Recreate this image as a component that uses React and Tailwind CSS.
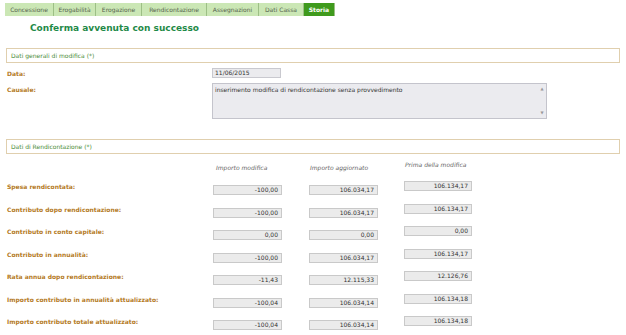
import React from 'react';

const tabs = [
  { label: 'Concessione', w: 'w-[49px]' },
  { label: 'Erogabilità', w: 'w-[42px]' },
  { label: 'Erogazione', w: 'w-[46px]' },
  { label: 'Rendicontazione', w: 'w-[65px]' },
  { label: 'Assegnazioni', w: 'w-[52px]' },
  { label: 'Dati Cassa', w: 'w-[45px]' },
  { label: 'Storia', w: 'w-[31px]', active: true },
];

const rows = [
  { label: 'Spesa rendicontata:', mod: '-100,00', agg: '106.034,17', prima: '106.134,17' },
  { label: 'Contributo dopo rendicontazione:', mod: '-100,00', agg: '106.034,17', prima: '106.134,17' },
  { label: 'Contributo in conto capitale:', mod: '0,00', agg: '0,00', prima: '0,00' },
  { label: 'Contributo in annualità:', mod: '-100,00', agg: '106.034,17', prima: '106.134,17' },
  { label: 'Rata annua dopo rendicontazione:', mod: '-11,43', agg: '12.115,33', prima: '12.126,76' },
  { label: 'Importo contributo in annualità attualizzato:', mod: '-100,04', agg: '106.034,14', prima: '106.134,18' },
  { label: 'Importo contributo totale attualizzato:', mod: '-100,04', agg: '106.034,14', prima: '106.134,18' },
];

const Field = ({ value, className = '' }) => (
  <div className={`h-[10px] bg-[#ebebeb] border border-[#c9c9c9] text-right pr-[3px] text-[6px] leading-[8px] text-[#333] ${className}`}>
    {value}
  </div>
);

const SectionHeader = ({ children, className = '' }) => (
  <div className={`mx-[6px] h-[15px] border border-[#e0cfae] flex items-center pl-[4px] text-[6px] text-[#4a8c38] ${className}`}>
    {children}
  </div>
);

const App = () => {
  return (
    <div className="w-[626px] h-[335px] overflow-hidden bg-white font-['DejaVu_Sans',sans-serif]">
      {/* Tabs */}
      <div className="flex pl-[5px] pt-[3px]">
        {tabs.map((tab) => (
          <div
            key={tab.label}
            className={`${tab.w} h-[13px] flex items-center justify-center text-[6px] border-r border-[#9dbf86] ${
              tab.active ? 'bg-[#3f9a1d] text-white font-bold' : 'bg-[#cbe7b5] text-[#55624d]'
            }`}
          >
            {tab.label}
          </div>
        ))}
      </div>

      <h1 className="ml-[30px] mt-[6px] text-[9px] leading-[12px] font-bold text-[#1f8a48]">
        Conferma avvenuta con successo
      </h1>

      {/* Dati generali */}
      <SectionHeader className="mt-[14px]">Dati generali di modifica (*)</SectionHeader>

      <div className="flex items-center mt-[5px] pl-[7px]">
        <div className="w-[205px] text-[6px] font-bold text-[#b47a1e]">Data:</div>
        <div className="w-[69px] h-[10px] bg-[#ebebee] border border-[#c9c9cf] text-[6px] leading-[8px] pl-[2px] text-[#333]">
          11/06/2015
        </div>
      </div>

      <div className="flex items-start mt-[5px] pl-[7px]">
        <div className="w-[205px] pt-[2px] text-[6px] font-bold text-[#b47a1e]">Causale:</div>
        <div className="w-[335px] h-[36px] bg-[#ebebef] border border-[#c4c4cc] flex">
          <div className="flex-1 pl-[2px] pt-[2px] text-[6px] leading-[8px] text-[#333]">
            inserimento modifica di rendicontazione senza provvedimento
          </div>
          <div className="w-[8px] flex flex-col justify-between items-center py-[2px] text-[4px] text-[#999]">
            <span>▲</span>
            <span>▼</span>
          </div>
        </div>
      </div>

      {/* Dati di Rendicontazione */}
      <SectionHeader className="mt-[20px]">Dati di Rendicontazione (*)</SectionHeader>

      <div className="flex pl-[7px] h-[28px] text-[6px] italic text-[#666]">
        <div className="w-[206px]" />
        <div className="w-[69px] pt-[9px] pl-[3px]">Importo modifica</div>
        <div className="w-[27px]" />
        <div className="w-[69px] pt-[9px] pl-[1px]">Importo aggiornato</div>
        <div className="w-[26px]" />
        <div className="w-[68px] pt-[6px] pl-[1px]">Prima della modifica</div>
      </div>

      {rows.map((row) => (
        <div key={row.label} className="flex items-start pl-[7px] h-[22.5px]">
          <div className="w-[206px] text-[6px] leading-[10px] font-bold text-[#b47a1e]">{row.label}</div>
          <Field value={row.mod} className="w-[69px] mt-[3px]" />
          <div className="w-[27px]" />
          <Field value={row.agg} className="w-[69px] mt-[3px]" />
          <div className="w-[26px]" />
          <Field value={row.prima} className="w-[68px] -mt-[1px]" />
        </div>
      ))}
    </div>
  );
};

export default App;
